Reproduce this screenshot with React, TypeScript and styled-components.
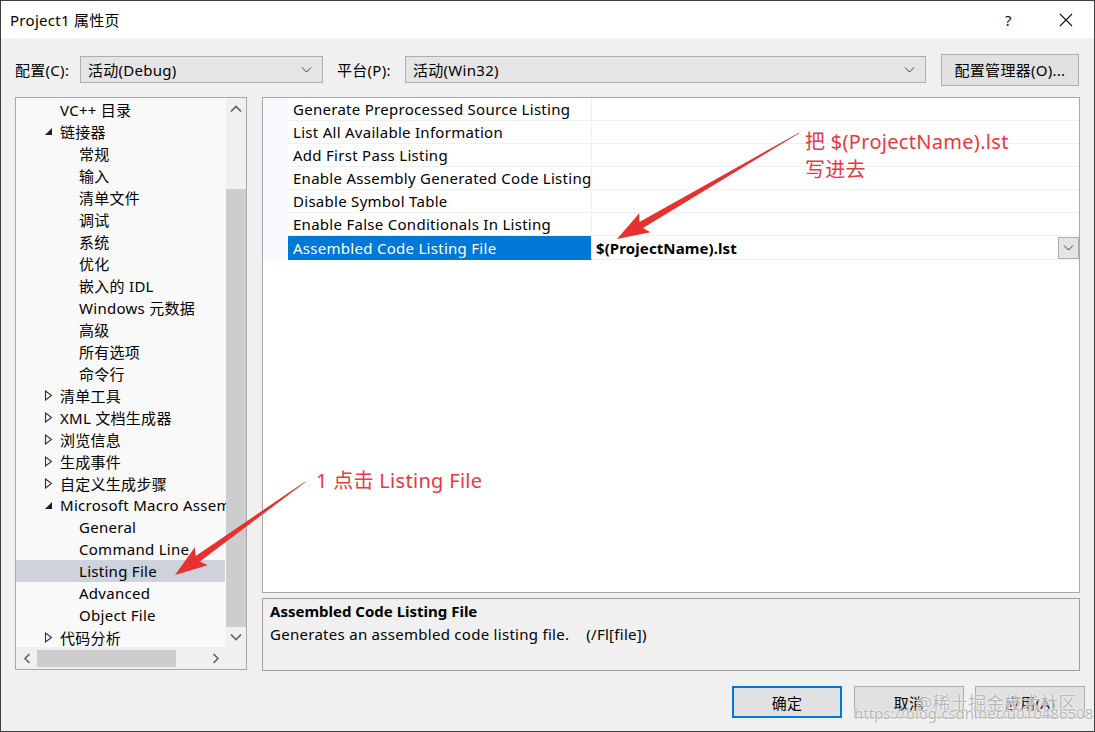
import React from 'react'
import styled, { createGlobalStyle } from 'styled-components'

const GlobalStyle = createGlobalStyle`
  body {
    margin: 0;
    background: #ffffff;
  }
`

const UI_FONT = `"Noto Sans", "Noto Sans CJK SC", sans-serif`

const Dialog = styled.div`
  position: relative;
  width: 1095px;
  height: 732px;
  box-sizing: border-box;
  border: 1px solid #3d3d3d;
  background: #f0f0f0;
  display: flex;
  flex-direction: column;
  overflow: hidden;
  font-family: ${UI_FONT};
  font-size: 15px;
  letter-spacing: 0.28px;
  color: #000;
`

const TitleBar = styled.div`
  height: 37px;
  flex: none;
  background: #ffffff;
  display: flex;
  align-items: center;
  padding-left: 9px;
`

const Title = styled.span`
  flex: 1;
  font-size: 15px;
`

const CaptionButton = styled.div`
  width: 57px;
  height: 37px;
  display: flex;
  align-items: center;
  justify-content: center;
  color: #111;
  font-size: 15px;
`

const ConfigRow = styled.div`
  margin-top: 16px;
  height: 31px;
  flex: none;
  display: flex;
  align-items: center;
  padding-left: 14px;
`

const Label = styled.span<{ $w: number }>`
  width: ${(p) => p.$w}px;
  flex: none;
`

const Select = styled.div<{ $w: number }>`
  width: ${(p) => p.$w}px;
  height: 27px;
  box-sizing: border-box;
  border: 1px solid #adadad;
  background: #e5e5e5;
  display: flex;
  align-items: center;
  padding: 0 10px 0 7px;
  flex: none;
  span {
    flex: 1;
  }
`

const PushButton = styled.div<{ $w: number; $default?: boolean }>`
  width: ${(p) => p.$w}px;
  height: 32px;
  box-sizing: border-box;
  border: ${(p) => (p.$default ? '2px solid #0078d7' : '1px solid #adadad')};
  background: #e1e1e1;
  display: flex;
  align-items: center;
  justify-content: center;
  flex: none;
`

const Main = styled.div`
  margin-top: 12px;
  height: 574px;
  flex: none;
  display: flex;
  gap: 15px;
  padding-left: 14px;
`

const TreeBox = styled.div`
  width: 232px;
  height: 573px;
  box-sizing: border-box;
  border: 1px solid #a9a9a9;
  background: #f9f9f9;
  display: grid;
  grid-template-columns: 1fr 20px;
  grid-template-rows: 1fr 22px;
  overflow: hidden;
`

const TreeList = styled.div`
  overflow: hidden;
`

const TreeRow = styled.div<{ $level: number; $selected?: boolean }>`
  height: 22px;
  display: flex;
  align-items: center;
  padding-left: ${(p) => (p.$level === 1 ? 28 : 63)}px;
  margin-right: 1px;
  background: ${(p) => (p.$selected ? '#cdd2dd' : 'transparent')};
  white-space: nowrap;
`

const Toggle = styled.span`
  width: 16px;
  flex: none;
  display: flex;
  align-items: center;
`

const VScroll = styled.div`
  background: #f0f0f0;
  display: flex;
  flex-direction: column;
`

const ScrollArrow = styled.div<{ $size: number }>`
  flex: none;
  height: ${(p) => p.$size}px;
  width: ${(p) => p.$size}px;
  display: flex;
  align-items: center;
  justify-content: center;
`

const VThumb = styled.div`
  margin-top: 70px;
  height: 438px;
  background: #cdcdcd;
`

const VArrowBox = styled.div<{ $h: number }>`
  height: ${(p) => p.$h}px;
  flex: none;
  display: flex;
  align-items: center;
  justify-content: center;
`

const HScroll = styled.div`
  background: #f0f0f0;
  display: flex;
  align-items: center;
`

const HThumb = styled.div`
  width: 139px;
  height: 17px;
  background: #cdcdcd;
`

const Corner = styled.div`
  background: #f0f0f0;
`

const RightCol = styled.div`
  width: 818px;
  display: flex;
  flex-direction: column;
  gap: 5px;
`

const Grid = styled.div`
  height: 496px;
  box-sizing: border-box;
  border: 1px solid #a9a9a9;
  background: #ffffff;
`

const GridRow = styled.div`
  height: 23px;
  display: grid;
  grid-template-columns: 25px 304px 1fr;
`

const Gutter = styled.div`
  background: #f7f9fc;
`

const NameCell = styled.div<{ $selected?: boolean }>`
  box-sizing: border-box;
  border-bottom: 1px solid ${(p) => (p.$selected ? '#0078d7' : '#f0f0f0')};
  border-right: 1px solid #f0f0f0;
  background: ${(p) => (p.$selected ? '#0078d7' : '#ffffff')};
  color: ${(p) => (p.$selected ? '#ffffff' : '#000')};
  padding-left: 5px;
  display: flex;
  align-items: center;
  white-space: nowrap;
  overflow: hidden;
`

const ValueCell = styled.div`
  box-sizing: border-box;
  border-bottom: 1px solid #f0f0f0;
  padding-left: 4px;
  display: flex;
  align-items: center;
  font-weight: 700;
  letter-spacing: 0.1px;
`

const ValueText = styled.span`
  flex: 1;
`

const DropButton = styled.div`
  width: 21px;
  height: 22px;
  box-sizing: border-box;
  border: 1px solid #adadad;
  background: #e5e5e5;
  display: flex;
  align-items: center;
  justify-content: center;
  margin-top: 1px;
`

const DescBox = styled.div`
  height: 73px;
  box-sizing: border-box;
  border: 1px solid #a0a0a0;
  background: #f0f0f0;
  padding: 1px 7px;
  line-height: 23px;
`

const DescTitle = styled.div`
  font-weight: 700;
  letter-spacing: 0;
`

const DescFlag = styled.span`
  margin-left: 17px;
`

const Footer = styled.div`
  margin-top: 15px;
  display: flex;
  justify-content: flex-end;
  gap: 12px;
  padding-right: 9px;
`

const Annotation = styled.div<{ $x: number; $y: number }>`
  position: absolute;
  left: ${(p) => p.$x}px;
  top: ${(p) => p.$y}px;
  color: #e8393f;
  font-size: 20px;
  line-height: 28px;
  letter-spacing: 0.3px;
  white-space: nowrap;
`

const Overlay = styled.svg`
  position: absolute;
  left: 0;
  top: 0;
  pointer-events: none;
`

const Watermark = styled.div<{ $x: number; $y: number; $size: number }>`
  position: absolute;
  left: ${(p) => p.$x}px;
  top: ${(p) => p.$y}px;
  font-size: ${(p) => p.$size}px;
  color: rgba(160, 160, 160, 0.75);
  text-shadow: 0 0 2px #fff, 0 0 1px #fff;
  white-space: nowrap;
  letter-spacing: 0;
`

const Chevron = ({ up, w = 9, color = '#444', sw = 1 }: { up?: boolean; w?: number; color?: string; sw?: number }) => (
  <svg width={w + 2} height={w / 2 + 3} viewBox={`-1 -1.5 ${w + 2} ${w / 2 + 3}`}>
    <polyline
      points={up ? `0,${w / 2} ${w / 2},0 ${w},${w / 2}` : `0,0 ${w / 2},${w / 2} ${w},0`}
      fill="none"
      stroke={color}
      strokeWidth={sw}
    />
  </svg>
)

const SideChevron = ({ right }: { right?: boolean }) => (
  <svg width="8" height="11" viewBox="0 0 8 11">
    <polyline
      points={right ? '1.5,1 6,5.5 1.5,10' : '6.5,1 2,5.5 6.5,10'}
      fill="none"
      stroke="#606060"
      strokeWidth={1.6}
    />
  </svg>
)

const Expanded = () => (
  <svg width="9" height="9" viewBox="0 0 9 9">
    <polygon points="8,1 8,8 1,8" fill="#1e1e1e" />
  </svg>
)

const Collapsed = () => (
  <svg width="9" height="11" viewBox="0 0 9 11">
    <polygon points="1.5,1 7.5,5.5 1.5,10" fill="none" stroke="#333" strokeWidth={1.1} />
  </svg>
)

type Node = { text: string; level: number; toggle?: 'open' | 'closed'; selected?: boolean }

const treeNodes: Node[] = [
  { text: 'VC++ 目录', level: 1 },
  { text: '链接器', level: 1, toggle: 'open' },
  { text: '常规', level: 2 },
  { text: '输入', level: 2 },
  { text: '清单文件', level: 2 },
  { text: '调试', level: 2 },
  { text: '系统', level: 2 },
  { text: '优化', level: 2 },
  { text: '嵌入的 IDL', level: 2 },
  { text: 'Windows 元数据', level: 2 },
  { text: '高级', level: 2 },
  { text: '所有选项', level: 2 },
  { text: '命令行', level: 2 },
  { text: '清单工具', level: 1, toggle: 'closed' },
  { text: 'XML 文档生成器', level: 1, toggle: 'closed' },
  { text: '浏览信息', level: 1, toggle: 'closed' },
  { text: '生成事件', level: 1, toggle: 'closed' },
  { text: '自定义生成步骤', level: 1, toggle: 'closed' },
  { text: 'Microsoft Macro Assembler', level: 1, toggle: 'open' },
  { text: 'General', level: 2 },
  { text: 'Command Line', level: 2 },
  { text: 'Listing File', level: 2, selected: true },
  { text: 'Advanced', level: 2 },
  { text: 'Object File', level: 2 },
  { text: '代码分析', level: 1, toggle: 'closed' },
]

const properties = [
  'Generate Preprocessed Source Listing',
  'List All Available Information',
  'Add First Pass Listing',
  'Enable Assembly Generated Code Listing',
  'Disable Symbol Table',
  'Enable False Conditionals In Listing',
  'Assembled Code Listing File',
]

// tapered annotation arrow, from tail to tip
function arrowPoints(x1: number, y1: number, x2: number, y2: number, head = 28, headW = 22, shaftW = 7) {
  const dx = x2 - x1
  const dy = y2 - y1
  const len = Math.hypot(dx, dy)
  const ux = dx / len
  const uy = dy / len
  const nx = -uy
  const ny = ux
  const bx = x2 - ux * head
  const by = y2 - uy * head
  const wx = x2 - ux * head * 1.15
  const wy = y2 - uy * head * 1.15
  const pts = [
    [x1 + nx * 0.4, y1 + ny * 0.4],
    [bx + (nx * shaftW) / 2, by + (ny * shaftW) / 2],
    [wx + (nx * headW) / 2, wy + (ny * headW) / 2],
    [x2, y2],
    [wx - (nx * headW) / 2, wy - (ny * headW) / 2],
    [bx - (nx * shaftW) / 2, by - (ny * shaftW) / 2],
    [x1 - nx * 0.4, y1 - ny * 0.4],
  ]
  return pts.map((p) => `${p[0].toFixed(1)},${p[1].toFixed(1)}`).join(' ')
}

export default function App() {
  return (
    <>
      <GlobalStyle />
      <Dialog>
        <TitleBar>
          <Title>Project1 属性页</Title>
          <CaptionButton>?</CaptionButton>
          <CaptionButton>
            <svg width="14" height="14" viewBox="0 0 14 14">
              <path d="M1 1 L13 13 M13 1 L1 13" stroke="#111" strokeWidth={1.1} />
            </svg>
          </CaptionButton>
        </TitleBar>

        <ConfigRow>
          <Label $w={65}>配置(C):</Label>
          <Select $w={243}>
            <span>活动(Debug)</span>
            <Chevron />
          </Select>
          <Label $w={68} style={{ marginLeft: 14 }}>平台(P):</Label>
          <Select $w={521}>
            <span>活动(Win32)</span>
            <Chevron />
          </Select>
          <PushButton $w={138} style={{ marginLeft: 15 }}>配置管理器(O)...</PushButton>
        </ConfigRow>

        <Main>
          <TreeBox>
            <TreeList>
              {treeNodes.map((n) => (
                <TreeRow key={n.text} $level={n.level} $selected={n.selected}>
                  {n.level === 1 && (
                    <Toggle>
                      {n.toggle === 'open' && <Expanded />}
                      {n.toggle === 'closed' && <Collapsed />}
                    </Toggle>
                  )}
                  {n.text}
                </TreeRow>
              ))}
            </TreeList>
            <VScroll>
              <VArrowBox $h={21}>
                <Chevron up w={10} color="#606060" sw={1.6} />
              </VArrowBox>
              <VThumb />
              <VArrowBox $h={20} style={{ marginTop: 'auto' }}>
                <Chevron w={10} color="#606060" sw={1.6} />
              </VArrowBox>
            </VScroll>
            <HScroll>
              <ScrollArrow $size={21}>
                <SideChevron />
              </ScrollArrow>
              <HThumb />
              <ScrollArrow $size={21} style={{ marginLeft: 'auto' }}>
                <SideChevron right />
              </ScrollArrow>
            </HScroll>
            <Corner />
          </TreeBox>

          <RightCol>
            <Grid>
              {properties.map((p, i) => {
                const sel = i === properties.length - 1
                return (
                  <GridRow key={p}>
                    <Gutter />
                    <NameCell $selected={sel}>{p}</NameCell>
                    <ValueCell>
                      <ValueText>{sel ? '$(ProjectName).lst' : ''}</ValueText>
                      {sel && (
                        <DropButton>
                          <Chevron w={9} color="#333" />
                        </DropButton>
                      )}
                    </ValueCell>
                  </GridRow>
                )
              })}
            </Grid>
            <DescBox>
              <DescTitle>Assembled Code Listing File</DescTitle>
              <div>
                Generates an assembled code listing file.<DescFlag>(/Fl[file])</DescFlag>
              </div>
            </DescBox>
          </RightCol>
        </Main>

        <Footer>
          <PushButton $w={110} $default>确定</PushButton>
          <PushButton $w={110}>取消</PushButton>
          <PushButton $w={110} style={{ marginLeft: -1 }}>应用(A)</PushButton>
        </Footer>

        <Overlay width={1095} height={732} viewBox="0 0 1095 732">
          <polygon points={arrowPoints(798, 132, 616, 238)} fill="#e8302f" />
          <polygon points={arrowPoints(304, 481, 174, 574)} fill="#e8302f" />
        </Overlay>

        <Annotation $x={804} $y={127}>
          把 $(ProjectName).lst
          <br />
          写进去
        </Annotation>
        <Annotation $x={315} $y={466}>1 点击 Listing File</Annotation>

        <Watermark $x={915} $y={688} $size={18}>@稀土掘金技术社区</Watermark>
        <Watermark $x={853} $y={702} $size={15}>https://blog.csdn.net/u010486508</Watermark>
      </Dialog>
    </>
  )
}
